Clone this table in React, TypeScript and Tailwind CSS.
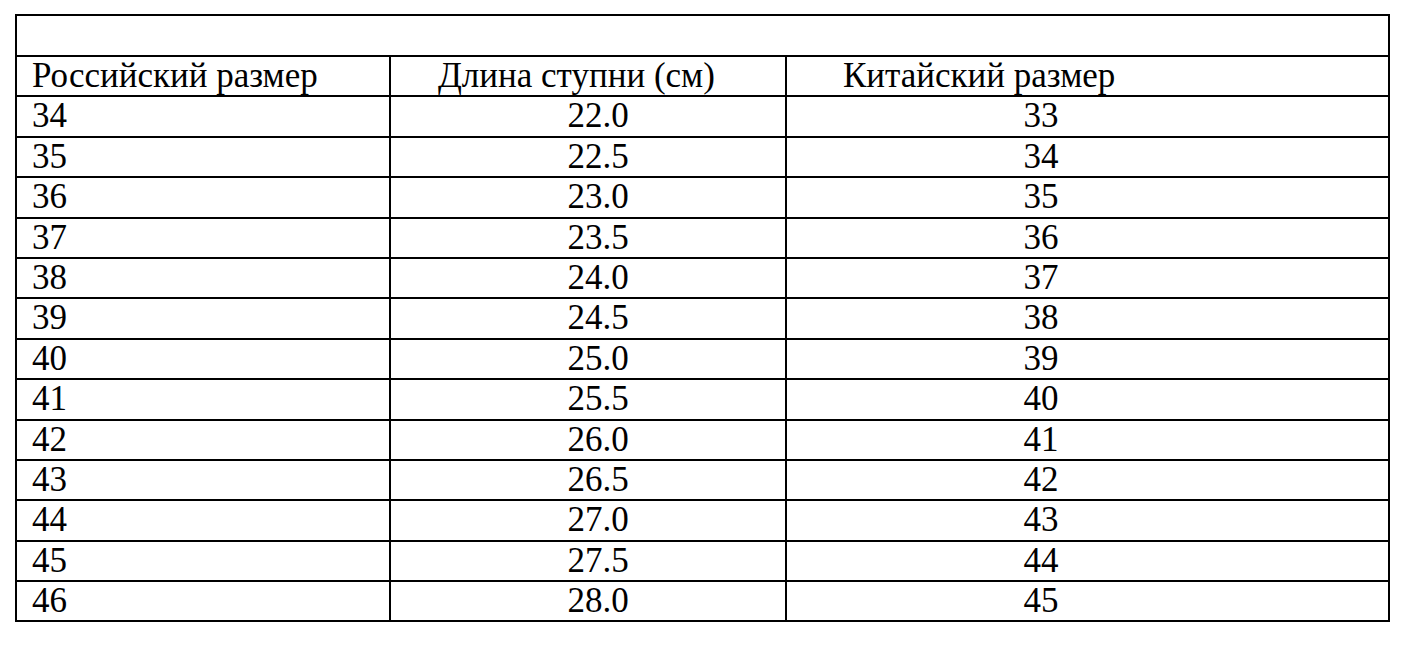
const rows: [string, string, string][] = [
  ["34", "22.0", "33"],
  ["35", "22.5", "34"],
  ["36", "23.0", "35"],
  ["37", "23.5", "36"],
  ["38", "24.0", "37"],
  ["39", "24.5", "38"],
  ["40", "25.0", "39"],
  ["41", "25.5", "40"],
  ["42", "26.0", "41"],
  ["43", "26.5", "42"],
  ["44", "27.0", "43"],
  ["45", "27.5", "44"],
  ["46", "28.0", "45"],
];

export default function App() {
  return (
    <div className="min-h-[650px] w-full bg-white pl-[15px] pt-[14px] font-['Liberation_Serif',serif] text-black">
      <table className="w-[1373px] table-fixed border-collapse border-2 border-black text-[35px] leading-[38px]">
        <colgroup>
          <col className="w-[374px]" />
          <col className="w-[396px]" />
          <col className="w-[603px]" />
        </colgroup>
        <tbody>
          <tr className="h-[41px]">
            <td colSpan={3} className="border-2 border-black p-0" />
          </tr>
          <tr className="h-[40.4px]">
            <td className="border-2 border-black p-0 pl-[15px] align-top">Российский размер</td>
            <td className="border-2 border-black p-0 pl-[47px] align-top">Длина ступни (см)</td>
            <td className="border-2 border-black p-0 pl-[56px] align-top">Китайский размер</td>
          </tr>
          {rows.map((r, i) => (
            <tr key={i} className="h-[40.4px]">
              <td className="border-2 border-black p-0 pl-[15px] align-top">{r[0]}</td>
              <td className="border-2 border-black p-0 pl-[20px] text-center align-top">{r[1]}</td>
              <td className="border-2 border-black p-0 pr-[93px] text-center align-top">{r[2]}</td>
            </tr>
          ))}
        </tbody>
      </table>
    </div>
  );
}
